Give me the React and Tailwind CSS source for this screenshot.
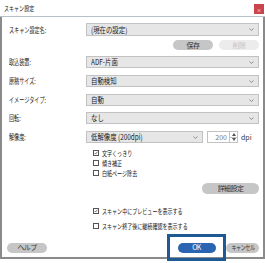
import React from "react";

const font = { fontFamily: '"Noto Sans CJK JP", "Noto Sans", sans-serif' };

// Meiryo UI is narrow; squeeze the CJK glyphs horizontally
const T = ({ children, className = "scale-x-[0.72]" }) => (
  <span className={`block whitespace-nowrap origin-left leading-none ${className}`}>
    {children}
  </span>
);

const Chevron = () => (
  <svg width="5" height="3" viewBox="0 0 5 3" className="shrink-0">
    <path d="M0.5 0.5 L2.5 2.5 L4.5 0.5" fill="none" stroke="#777" strokeWidth="0.8" />
  </svg>
);

const Select = ({ value, className = "" }) => (
  <div
    className={`flex items-center justify-between h-[12px] pl-[4px] pr-[4px] bg-[#e6e6e6] border border-[#c2c2c2] ${className}`}
  >
    <div className="text-[8px] leading-none text-[#222]">
      <T className="scale-x-[0.8]">{value}</T>
    </div>
    <Chevron />
  </div>
);

const Row = ({ label, children, className = "" }) => (
  <div className={`flex items-center ${className}`}>
    <div className="w-[84px] pl-[7px] text-[7.5px] leading-none text-[#222]">
      <T className="scale-x-[0.68]">{label}</T>
    </div>
    <div className="flex-1 flex items-center">{children}</div>
  </div>
);

const Check = ({ checked, label, className = "" }) => (
  <div className={`flex items-center gap-[3px] h-[6px] shrink-0 ${className}`}>
    <div className="w-[6px] h-[6px] shrink-0 border border-[#555] bg-white flex items-center justify-center">
      {checked && (
        <svg width="6" height="6" viewBox="0 0 6 6">
          <path d="M1 3 L2.4 4.6 L5 1.2" fill="none" stroke="#222" strokeWidth="0.9" />
        </svg>
      )}
    </div>
    <div className="text-[7px] leading-none text-[#222]">
      <T>{label}</T>
    </div>
  </div>
);

const Pill = ({ children, className = "" }) => (
  <div
    className={`flex items-center justify-center h-[10px] rounded-full text-[7px] leading-none tracking-[-0.6px] ${className}`}
  >
    {children}
  </div>
);

export default function App() {
  return (
    <div className="w-[265px] h-[263px] bg-white overflow-hidden" style={font}>
      <div className="relative h-[17px] border-b border-[#b8c0cc] flex items-center">
        <div className="pl-[4px] text-[7px] leading-none text-[#222]">
          <T>スキャン設定</T>
        </div>
        <div className="absolute right-[1px] top-[4px] w-[10px] h-[10px] bg-[#c9444c] flex items-center justify-center">
          <span className="text-white text-[5px] leading-none">×</span>
        </div>
      </div>
      <div className="h-[242px] border-l-2 border-r-2 border-b-2 border-[#8a8a8a] flex flex-col pr-[4px] [&>*]:shrink-0">
        <Row label="スキャン設定名:" className="mt-[6px]">
          <Select value="(現在の設定)" className="w-full h-[13px]" />
        </Row>
        <div className="flex justify-end gap-[6px] mt-[4px]">
          <Pill className="w-[40px] bg-[#c6c6c6] text-[#333]">保存</Pill>
          <Pill className="w-[40px] bg-[#ececec] text-[#c4c4c4]">削除</Pill>
        </div>
        <Row label="取込装置:" className="mt-[6px]">
          <Select value="ADF-片面" className="w-full" />
        </Row>
        <Row label="原稿サイズ:" className="mt-[7px]">
          <Select value="自動検知" className="w-full" />
        </Row>
        <Row label="イメージタイプ:" className="mt-[7px]">
          <Select value="自動" className="w-full" />
        </Row>
        <Row label="回転:" className="mt-[6px]">
          <Select value="なし" className="w-full" />
        </Row>
        <Row label="解像度:" className="mt-[7px]">
          <Select value="低解像度 (200dpi)" className="w-[117px]" />
          <div className="ml-[4px] flex items-center h-[12px] w-[31px] border border-[#c2c2c2] bg-white">
            <span className="flex-1 text-right pr-[2px] text-[7px] leading-none text-[#777]">200</span>
            <div className="w-[8px] h-full border-l border-[#c2c2c2] flex flex-col">
              <div className="flex-1 flex items-center justify-center border-b border-[#c2c2c2]">
                <svg width="4" height="3" viewBox="0 0 4 3"><path d="M0 3 L2 0 L4 3 Z" fill="#555" /></svg>
              </div>
              <div className="flex-1 flex items-center justify-center">
                <svg width="4" height="3" viewBox="0 0 4 3"><path d="M0 0 L2 3 L4 0 Z" fill="#555" /></svg>
              </div>
            </div>
          </div>
          <span className="ml-[3px] text-[7px] leading-none text-[#333]">dpi</span>
        </Row>
        <div className="pl-[91px] flex flex-col gap-[4px] mt-[7px]">
          <Check checked label="文字くっきり" />
          <Check label="傾き補正" />
          <Check label="白紙ページ除去" />
        </div>
        <div className="flex justify-end mt-[7px]">
          <Pill className="w-[57px] h-[11px] bg-[#c6c6c6] text-[#333]">詳細設定</Pill>
        </div>
        <div className="pl-[91px] flex flex-col gap-[9px] mt-[14px]">
          <Check checked label="スキャン中にプレビューを表示する" />
          <Check label="スキャン終了後に継続確認を表示する" />
        </div>
        <div className="flex items-center mt-[5px] pl-[5px]">
          <Pill className="w-[40px] bg-[#c6c6c6] text-[#333]">ヘルプ</Pill>
          <div className="ml-auto border-[3px] border-[#1f5a94] w-[59px] h-[27px] flex items-center justify-center">
            <Pill className="w-[38px] bg-[#2b64b0] text-white">OK</Pill>
          </div>
          <Pill className="w-[33px] bg-[#c6c6c6] text-[#333]">
            <span className="block whitespace-nowrap scale-x-[0.72]">キャンセル</span>
          </Pill>
        </div>
      </div>
    </div>
  );
}
